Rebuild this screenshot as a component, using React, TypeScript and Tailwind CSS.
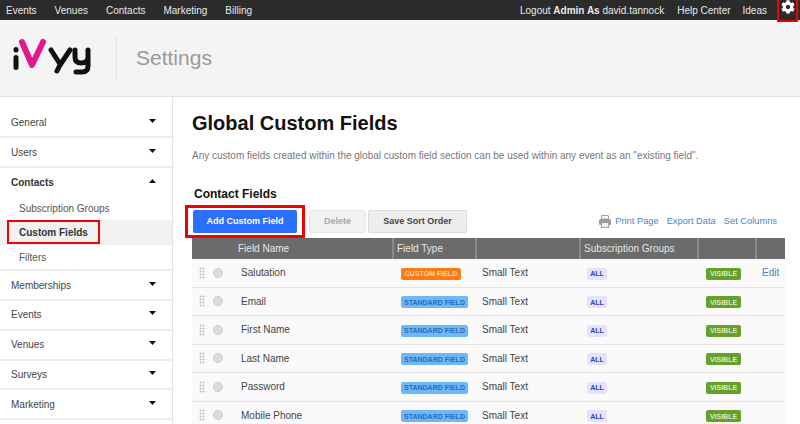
import { FaCog } from 'react-icons/fa';

const navLeft = ['Events', 'Venues', 'Contacts', 'Marketing', 'Billing'];

const rows = [
  { name: 'Salutation', custom: true, edit: true },
  { name: 'Email' },
  { name: 'First Name' },
  { name: 'Last Name' },
  { name: 'Password' },
  { name: 'Mobile Phone' },
];

function Caret({ up }: { up?: boolean }) {
  return (
    <svg width="7" height="4" viewBox="0 0 7 4" className="mt-[-3px]">
      <path d={up ? 'M0 4 L3.5 0 L7 4 Z' : 'M0 0 L7 0 L3.5 4 Z'} fill="#111" />
    </svg>
  );
}

function SideItem({ label }: { label: string }) {
  return (
    <div className="flex h-[29.8px] items-center justify-between border-b-2 border-[#ececec] pl-[11px] pr-[16px] text-[10px] text-[#444]">
      <span>{label}</span>
      <Caret />
    </div>
  );
}

function Logo() {
  return (
    <svg width="84" height="40" viewBox="0 0 84 40">
      <g fill="none" strokeLinecap="round" strokeLinejoin="round">
        <path d="M3 19.5 V29.5" stroke="#111" strokeWidth="5" />
        <path d="M3 11.5 V12" stroke="#111" strokeWidth="5" />
        <path d="M9 4 L19 27 L30 4" stroke="#e6178c" strokeWidth="6" />
        <path d="M38 12 L47 26" stroke="#111" strokeWidth="5" />
        <path d="M57 12 L47 27 L44 33" stroke="#111" strokeWidth="5" />
        <path d="M62 12 V19 Q62 25 68 25 Q75 25 75 19 V12 V28 Q75 34 69 34 H63" stroke="#111" strokeWidth="5" />
      </g>
    </svg>
  );
}

function Tag({ className, children }: { className: string; children: string }) {
  return (
    <span className={`inline-flex h-[12px] items-center justify-center rounded-[2px] text-[7px] font-bold leading-none ${className}`}>
      {children}
    </span>
  );
}

function Btn({ className, children }: { className: string; children: string }) {
  return (
    <button className={`flex h-[23px] items-center justify-center rounded-[2px] text-[9px] font-bold ${className}`}>
      {children}
    </button>
  );
}

const cols = 'grid grid-cols-[200px_83px_104px_118px_58px_30px]';

export default function App() {
  return (
    <div className="relative h-[424px] w-[800px] overflow-hidden bg-white font-['Liberation_Sans',Arial,sans-serif]">
      <header className="flex h-[20px] items-center justify-between bg-[#2b2b2b] pl-[6px] text-[10px] text-[#e8e8e8]">
        <nav className="flex gap-[18px]">
          {navLeft.map((item) => (
            <span key={item}>{item}</span>
          ))}
        </nav>
        <div className="flex items-center">
          <span>
            Logout <b>Admin As</b> david.tannock
          </span>
          <span className="ml-[13px]">Help Center</span>
          <span className="ml-[12px]">Ideas</span>
          <span className="relative z-10 ml-[10px] mr-[2px] flex h-[24px] w-[21px] items-start justify-center self-start border-2 border-t-0 border-[#f00000] pt-[2px]">
            <FaCog size={14} className="text-white" />
          </span>
        </div>
      </header>

      <div className="flex h-[77px] items-center border-b border-[#e4e4e4] bg-[#f4f4f4] pl-[13px]">
        <Logo />
        <div className="ml-[19px] h-[42px] w-px bg-[#e2e2e2]" />
        <h2 className="ml-[19px] text-[21px] text-[#9a9a9a]">Settings</h2>
      </div>

      <div className="flex">
        <aside className="h-[327px] w-[173px] shrink-0 border-r border-[#e4e4e4] pt-[11.6px]">
          <SideItem label="General" />
          <SideItem label="Users" />
          <div className="border-b-2 border-[#ececec] text-[10px]">
            <div className="flex h-[28px] items-center justify-between pl-[11px] pr-[16px] font-bold text-[#333]">
              <span>Contacts</span>
              <Caret up />
            </div>
            <div className="flex h-[24px] items-center pl-[19px] text-[#555]">Subscription Groups</div>
            <div className="relative flex h-[25px] items-center bg-[#f1f1f1] pl-[19px] font-bold text-[#333]">
              Custom Fields
              <span className="absolute left-[7px] top-0 h-[24px] w-[93px] border-[2.5px] border-[#f00000]" />
            </div>
            <div className="flex h-[24px] items-center pl-[19px] text-[#555]">Filters</div>
          </div>
          {['Memberships', 'Events', 'Venues', 'Surveys', 'Marketing'].map((item) => (
            <SideItem key={item} label={item} />
          ))}
        </aside>

        <main className="min-w-0 flex-1 pl-[19px] pr-[15px]">
          <h1 className="mt-[13px] text-[20px] font-bold leading-[26px] text-[#111]">Global Custom Fields</h1>
          <p className="mt-[14px] text-[10px] leading-[12px] text-[#777]">
            Any custom fields created within the global custom field section can be used within any event as an "existing field".
          </p>
          <h3 className="ml-[2px] mt-[25px] text-[12px] font-bold leading-[15px] text-[#111]">Contact Fields</h3>

          <div className="mt-[3px] flex items-center">
            <div className="-ml-[7px] flex h-[33px] w-[120px] items-center justify-center border-[3px] border-[#f00000]">
              <Btn className="w-[104px] bg-[#2a6fff] text-white">Add Custom Field</Btn>
            </div>
            <Btn className="ml-[4px] w-[57px] border border-[#e6e6e6] bg-[#f1f1f1] text-[#a8a8a8]">Delete</Btn>
            <Btn className="ml-[2px] w-[99px] border border-[#dcdcdc] bg-[#eeeeee] text-[#444]">Save Sort Order</Btn>
            <div className="ml-auto flex items-center pr-[8px] text-[9.3px] text-[#4a86c5]">
              <svg width="12" height="13" viewBox="0 0 12 13" className="mr-[4px]">
                <rect x="2.5" y="0.5" width="7" height="3.5" rx="0.5" fill="none" stroke="#a0a0a0" />
                <rect x="0" y="4" width="12" height="6" rx="1.5" fill="#9a9a9a" />
                <rect x="2.5" y="7.5" width="7" height="5" fill="#eee" stroke="#a0a0a0" />
              </svg>
              <span>Print Page</span>
              <span className="ml-[8px]">Export Data</span>
              <span className="ml-[8px]">Set Columns</span>
            </div>
          </div>

          <div className="w-[593px]">
            <div className={`${cols} h-[21px] bg-[#6b6b6b] text-[10px] leading-[21px] text-[#e6e6e6]`}>
              <span className="pl-[46px]">Field Name</span>
              <span className="border-l-2 border-[#8a8a8a] pl-[3px]">Field Type</span>
              <span className="border-l-2 border-[#8a8a8a]" />
              <span className="border-l-2 border-[#8a8a8a] pl-[3px]">Subscription Groups</span>
              <span className="border-l-2 border-[#8a8a8a]" />
              <span className="border-l-2 border-[#8a8a8a]" />
            </div>
            {rows.map((row) => (
              <div key={row.name} className={`${cols} h-[28.5px] items-center border-b border-[#e6e6e6] bg-[#fafafa] text-[10px] text-[#444]`}>
                <span className="flex items-center pl-[7px]">
                  <span className="h-[12px] w-[6px] bg-[radial-gradient(#c4c4c4_45%,transparent_50%)] bg-[length:3px_3px]" />
                  <span className="ml-[8px] h-[10px] w-[10px] rounded-full border border-[#cccccc] bg-[#dcdcdc]" />
                  <span className="ml-[18px]">{row.name}</span>
                </span>
                <span className="pl-[9px]">
                  {row.custom ? (
                    <Tag className="w-[60px] bg-[#ff7a14] text-[#ffd9b0]">CUSTOM FIELD</Tag>
                  ) : (
                    <Tag className="w-[67px] bg-[#6cb8f8] text-[#2a6cb8]">STANDARD FIELD</Tag>
                  )}
                </span>
                <span className="pl-[7px]">Small Text</span>
                <span className="pl-[8px]">
                  <Tag className="w-[20px] bg-[#e3e3fb] text-[#3c3cc0]">ALL</Tag>
                </span>
                <span className="pl-[9px]">
                  <Tag className="w-[35px] bg-[#64a02a] text-[#d8ecc4]">VISIBLE</Tag>
                </span>
                <span className="pl-[7px] text-[#4a86c5]">{row.edit ? 'Edit' : ''}</span>
              </div>
            ))}
          </div>
        </main>
      </div>
    </div>
  );
}
